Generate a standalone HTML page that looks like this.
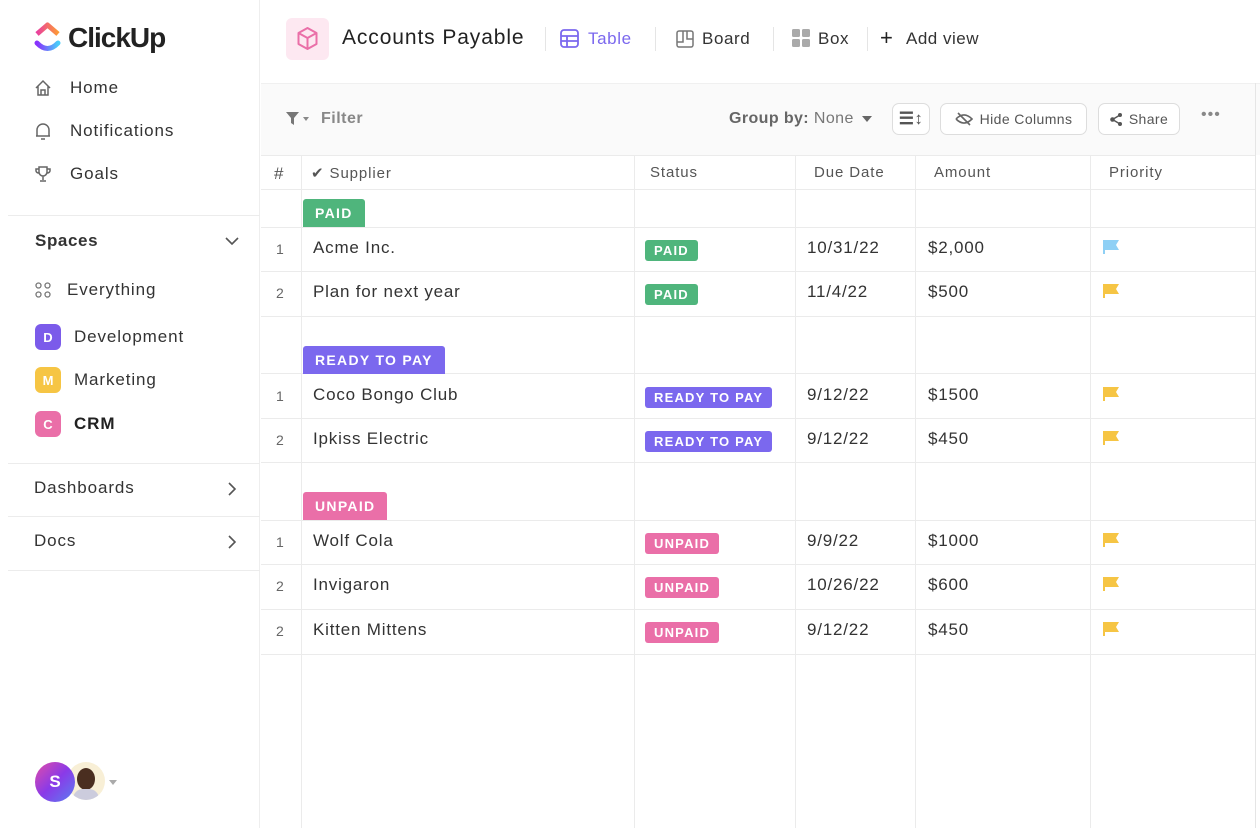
<!DOCTYPE html><html><head><meta charset="utf-8"><style>
*{box-sizing:border-box;margin:0;padding:0}
body{width:1260px;height:828px;background:#fff;font-family:"Liberation Sans",sans-serif;position:relative;overflow:hidden;color:#292d34}
.a{position:absolute}
.side{left:0;top:0;width:260px;height:828px;border-right:1px solid #eee;background:#fff}
.nav{left:34px;font-size:17px;color:#333;display:flex;align-items:center;gap:18px;letter-spacing:.9px}
.hr{left:8px;width:252px;height:1px;background:#ececec}
.sq{width:26px;height:26px;border-radius:6px;color:#fff;font-size:13px;font-weight:bold;display:flex;align-items:center;justify-content:center;letter-spacing:0}
.tb{background:#fafafa;left:261px;top:83px;width:999px;height:72px;border-top:1px solid #f0f0f0}
.btn{border:1px solid #ddd;border-radius:7px;height:32px;top:103px;background:#fff;font-size:14px;color:#555;display:flex;align-items:center;justify-content:center;gap:7px;letter-spacing:.4px}
.vl{width:1px;background:#ebebeb;top:155px;height:673px}
.hl{height:1px;background:#ebebeb;left:261px;width:994px}
.th{top:164px;font-size:15px;color:#555;letter-spacing:.9px}
.cell{font-size:17px;color:#333;letter-spacing:.8px}
.num{font-size:14px;color:#666;left:276px}
.bd{font-size:13px;font-weight:bold;color:#fff;border-radius:3px;padding:3px 9px;letter-spacing:1.2px}
.gb{font-size:14px;font-weight:bold;color:#fff;border-radius:3px 3px 0 0;padding:6px 12px;height:28px;letter-spacing:1.3px}
.flag{width:16px;height:14px}
</style></head><body>
<div class="a side"></div>
<svg class="a" style="left:34px;top:22px" width="27" height="32" viewBox="0 0 27 32"><defs><linearGradient id="g1" x1="0" x2="1"><stop offset="0" stop-color="#e93fa0"/><stop offset="1" stop-color="#fd9a36"/></linearGradient><linearGradient id="g2" x1="0" x2="1"><stop offset="0" stop-color="#8930fd"/><stop offset="1" stop-color="#49ccf9"/></linearGradient></defs><path d="M3 12 L13.5 3 L24 12" fill="none" stroke="url(#g1)" stroke-width="5" stroke-linejoin="round"/><path d="M3 21 Q13.5 32 24 21" fill="none" stroke="url(#g2)" stroke-width="5" stroke-linecap="round"/></svg>
<div class="a" style="left:68px;top:22px;font-size:28px;font-weight:bold;color:#222;letter-spacing:-1px">ClickUp</div>
<div class="a nav" style="top:78px"><svg width="18" height="18" viewBox="0 0 18 18" fill="none" stroke="#666" stroke-width="1.5"><path d="M2 9 L9 2 L16 9 M4 7 V16 H14 V7 M7 16 V11 H11 V16"/></svg>Home</div>
<div class="a nav" style="top:121px"><svg width="18" height="20" viewBox="0 0 18 20" fill="none" stroke="#666" stroke-width="1.5"><path d="M3 15 V9 A6 6 0 0 1 15 9 V15 H2 H16 M7 18 H11"/></svg>Notifications</div>
<div class="a nav" style="top:164px"><svg width="18" height="18" viewBox="0 0 18 18" fill="none" stroke="#666" stroke-width="1.5"><path d="M5 2 H13 V7 A4 4 0 0 1 5 7 Z M5 4 H2 V6 A3 3 0 0 0 5 8 M13 4 H16 V6 A3 3 0 0 1 13 8 M9 11 V15 M6 16 H12"/></svg>Goals</div>
<div class="a hr" style="top:215px"></div>
<div class="a" style="left:35px;top:231px;font-size:17px;font-weight:bold;color:#333;letter-spacing:.6px">Spaces</div>
<svg class="a" style="left:224px;top:236px" width="16" height="10"><path d="M2 2 L8 8 L14 2" fill="none" stroke="#555" stroke-width="1.6"/></svg>
<div class="a nav" style="top:280px;gap:15px"><svg width="18" height="18" viewBox="0 0 18 18" fill="none" stroke="#777" stroke-width="1.3"><circle cx="4.5" cy="4.5" r="2.5"/><circle cx="13.5" cy="4.5" r="2.5"/><circle cx="4.5" cy="13.5" r="2.5"/><circle cx="13.5" cy="13.5" r="2.5"/></svg>Everything</div>
<div class="a nav" style="top:324px;left:35px;gap:13px"><div class="sq" style="background:#7b5bea">D</div>Development</div>
<div class="a nav" style="top:367px;left:35px;gap:13px"><div class="sq" style="background:#f6c544">M</div>Marketing</div>
<div class="a nav" style="top:411px;left:35px;gap:13px"><div class="sq" style="background:#ea6fa8">C</div><b style="font-weight:bold;color:#222">CRM</b></div>
<div class="a hr" style="top:463px"></div>
<div class="a nav" style="top:478px">Dashboards</div>
<svg class="a" style="left:227px;top:481px" width="10" height="16"><path d="M2 2 L8 8 L2 14" fill="none" stroke="#555" stroke-width="1.6"/></svg>
<div class="a hr" style="top:516px"></div>
<div class="a nav" style="top:531px">Docs</div>
<svg class="a" style="left:227px;top:534px" width="10" height="16"><path d="M2 2 L8 8 L2 14" fill="none" stroke="#555" stroke-width="1.6"/></svg>
<div class="a hr" style="top:570px"></div>
<div class="a" style="left:67px;top:762px;width:38px;height:38px;border-radius:50%;background:#f8efd6;overflow:hidden"><div style="position:absolute;left:10px;top:6px;width:18px;height:22px;border-radius:50%;background:#4a2e20"></div><div style="position:absolute;left:6px;top:27px;width:26px;height:12px;border-radius:10px 10px 0 0;background:#ccd"></div></div>
<div class="a" style="left:35px;top:762px;width:40px;height:40px;border-radius:50%;background:linear-gradient(135deg,#e14da8,#8a3ae8 50%,#5a7ff0);color:#fff;font-weight:bold;font-size:17px;display:flex;align-items:center;justify-content:center">S</div>
<div class="a" style="left:109px;top:780px;border:4px solid transparent;border-top:5px solid #aaa"></div>

<div class="a" style="left:286px;top:18px;width:43px;height:42px;border-radius:6px;background:#fde8f1"></div>
<svg class="a" style="left:295px;top:26px" width="25" height="26" viewBox="0 0 24 26" fill="none" stroke="#ea6fa8" stroke-width="2" stroke-linejoin="round"><path d="M12 2 L21 7 V18 L12 23 L3 18 V7 Z M3 7 L12 12 L21 7 M12 12 V23"/></svg>
<div class="a" style="left:342px;top:26px;font-size:21px;color:#222;letter-spacing:.9px">Accounts Payable</div>
<div class="a" style="left:545px;top:27px;width:1px;height:24px;background:#e5e5e5"></div>
<svg class="a" style="left:560px;top:29px" width="19" height="19" viewBox="0 0 19 19" fill="none" stroke="#7b68ee" stroke-width="1.8"><rect x="1" y="1" width="17" height="17" rx="3"/><path d="M1 7 H18 M1 12 H18 M7 7 V18"/></svg>
<div class="a" style="left:588px;top:29px;font-size:17px;color:#7b68ee;letter-spacing:.6px">Table</div>
<div class="a" style="left:655px;top:27px;width:1px;height:24px;background:#e5e5e5"></div>
<svg class="a" style="left:676px;top:30px" width="18" height="18" viewBox="0 0 18 18" fill="none" stroke="#777" stroke-width="1.5"><rect x="1" y="1" width="16" height="16" rx="2"/><path d="M7 1 V12 H1 M11 1 V9 H17"/></svg>
<div class="a" style="left:702px;top:29px;font-size:17px;color:#333;letter-spacing:.6px">Board</div>
<div class="a" style="left:773px;top:27px;width:1px;height:24px;background:#e5e5e5"></div>
<svg class="a" style="left:792px;top:29px" width="19" height="19"><rect x="0" y="0" width="8" height="8" rx="1.5" fill="#aaa"/><rect x="10" y="0" width="8" height="8" rx="1.5" fill="#aaa"/><rect x="0" y="10" width="8" height="8" rx="1.5" fill="#aaa"/><rect x="10" y="10" width="8" height="8" rx="1.5" fill="#aaa"/></svg>
<div class="a" style="left:818px;top:29px;font-size:17px;color:#333;letter-spacing:.6px">Box</div>
<div class="a" style="left:867px;top:27px;width:1px;height:24px;background:#e5e5e5"></div>
<div class="a" style="left:880px;top:25px;font-size:22px;color:#222">+</div>
<div class="a" style="left:906px;top:29px;font-size:17px;color:#333;letter-spacing:.5px">Add view</div>

<div class="a tb"></div>
<svg class="a" style="left:286px;top:112px" width="26" height="14"><path d="M0 0 H13 L8 6 V13 L5 11 V6 Z" fill="#777"/><path d="M17 5 H23 L20 9 Z" fill="#888"/></svg>
<div class="a" style="left:321px;top:110px;font-size:16px;color:#888;font-weight:bold;letter-spacing:.5px">Filter</div>
<div class="a" style="left:729px;top:110px;font-size:16px;color:#666;letter-spacing:.4px"><b>Group by:</b> <span style="color:#777">None</span></div>
<div class="a" style="left:862px;top:116px;border:5px solid transparent;border-top:6px solid #666"></div>
<div class="a btn" style="left:892px;width:38px;font-weight:bold;font-size:17px;color:#555">☰↕</div>
<div class="a btn" style="left:940px;width:147px"><svg width="18" height="14" viewBox="0 0 18 14" fill="none" stroke="#666" stroke-width="1.6"><path d="M1 7 Q9 -1 17 7 Q9 15 1 7 M3 1 L15 13"/></svg>Hide Columns</div>
<div class="a btn" style="left:1098px;width:82px"><svg width="12" height="13"><circle cx="2.5" cy="6.5" r="2.3" fill="#555"/><circle cx="10" cy="2" r="2" fill="#555"/><circle cx="10" cy="11" r="2" fill="#555"/><path d="M2.5 6.5 L10 2 M2.5 6.5 L10 11" stroke="#555" stroke-width="1.4"/></svg>Share</div>
<div class="a" style="left:1201px;top:106px;font-size:16px;color:#888;letter-spacing:1px">•••</div>

<div class="a" style="left:1255px;top:83px;width:1px;height:745px;background:#e5e5e5"></div>
<div class="a vl" style="left:301px"></div><div class="a vl" style="left:634px"></div><div class="a vl" style="left:795px"></div><div class="a vl" style="left:915px"></div><div class="a vl" style="left:1090px"></div>
<div class="a hl" style="top:155px"></div><div class="a hl" style="top:189px"></div>
<div class="a hl" style="top:227px"></div><div class="a hl" style="top:271px"></div><div class="a hl" style="top:316px"></div>
<div class="a hl" style="top:373px"></div><div class="a hl" style="top:418px"></div><div class="a hl" style="top:462px"></div>
<div class="a hl" style="top:520px"></div><div class="a hl" style="top:564px"></div><div class="a hl" style="top:609px"></div><div class="a hl" style="top:654px"></div>
<div class="a th" style="left:274px;font-size:17px">#</div>
<div class="a th" style="left:311px">✔ Supplier</div>
<div class="a th" style="left:650px">Status</div>
<div class="a th" style="left:814px">Due Date</div>
<div class="a th" style="left:934px">Amount</div>
<div class="a th" style="left:1109px">Priority</div>

<div class="a gb" style="left:303px;top:199px;background:#4fb57c">PAID</div>
<div class="a gb" style="left:303px;top:346px;background:#7b68ee">READY TO PAY</div>
<div class="a gb" style="left:303px;top:492px;background:#ea6fa8">UNPAID</div>

<div id="rows"></div>
<script>
const R=[[238,'1','Acme Inc.','PAID','#4fb57c','10/31/22','$2,000','#8fd0f5'],
[282,'2','Plan for next year','PAID','#4fb57c','11/4/22','$500','#f6c544'],
[385,'1','Coco Bongo Club','READY TO PAY','#7b68ee','9/12/22','$1500','#f6c544'],
[429,'2','Ipkiss Electric','READY TO PAY','#7b68ee','9/12/22','$450','#f6c544'],
[531,'1','Wolf Cola','UNPAID','#ea6fa8','9/9/22','$1000','#f6c544'],
[575,'2','Invigaron','UNPAID','#ea6fa8','10/26/22','$600','#f6c544'],
[620,'2','Kitten Mittens','UNPAID','#ea6fa8','9/12/22','$450','#f6c544']];
let h='';for(const r of R){const t=r[0];
h+=`<div class="a num" style="top:${t+3}px">${r[1]}</div><div class="a cell" style="left:313px;top:${t}px">${r[2]}</div><div class="a bd" style="left:645px;top:${t+2}px;background:${r[4]}">${r[3]}</div><div class="a cell" style="left:807px;top:${t}px">${r[5]}</div><div class="a cell" style="left:928px;top:${t}px">${r[6]}</div><svg class="a flag" style="left:1103px;top:${t+2}px" viewBox="0 0 16 14"><path d="M0 0 H16 L13 5 L16 10 H2 V14 H0 Z" fill="${r[7]}"/></svg>`;}
document.getElementById('rows').innerHTML=h;
</script>
</body></html>
